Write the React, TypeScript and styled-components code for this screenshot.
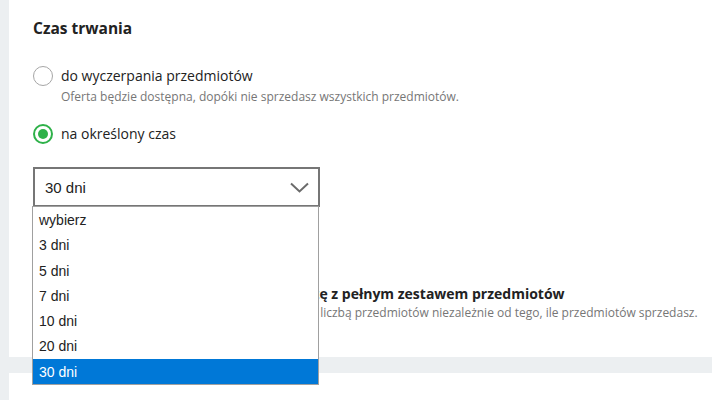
import React from 'react';
import styled, { createGlobalStyle } from 'styled-components';

const GlobalStyle = createGlobalStyle`
  html, body {
    margin: 0;
    padding: 0;
    background: #eceff1;
    font-family: "Open Sans", "Liberation Sans", sans-serif;
    color: #222222;
  }
`;

const Page = styled.div`
  display: flex;
  flex-direction: column;
  gap: 16px;
  padding-left: 9px;
  height: 400px;
  overflow: hidden;
`;

const Card = styled.section<{ $height?: number }>`
  background: #ffffff;
  padding: 16px 24px 0;
  height: ${(p) => (p.$height ? `${p.$height}px` : 'auto')};
  box-sizing: border-box;
  flex-shrink: 0;
`;

const Heading = styled.h2`
  margin: 0;
  font-size: 15.5px;
  font-weight: 700;
  line-height: 24px;
`;

const Options = styled.div`
  display: flex;
  flex-direction: column;
  margin-top: 26px;
`;

const Option = styled.label<{ $gap?: number }>`
  display: flex;
  align-items: flex-start;
  gap: 8px;
  margin-bottom: ${(p) => p.$gap ?? 0}px;
`;

const Radio = styled.span<{ $checked?: boolean }>`
  width: 20px;
  height: 20px;
  box-sizing: border-box;
  border-radius: 50%;
  border: ${(p) => (p.$checked ? '2px solid #2eb149' : '1px solid #a6a6a6')};
  display: flex;
  align-items: center;
  justify-content: center;
  flex-shrink: 0;
  &::after {
    content: '';
    display: ${(p) => (p.$checked ? 'block' : 'none')};
    width: 10px;
    height: 10px;
    border-radius: 50%;
    background: #2eb149;
  }
`;

const Checkbox = styled.span`
  width: 20px;
  height: 20px;
  box-sizing: border-box;
  border: 1px solid #a6a6a6;
  flex-shrink: 0;
`;

const OptionText = styled.div`
  display: flex;
  flex-direction: column;
`;

const Label = styled.span<{ $bold?: boolean }>`
  font-size: 14px;
  line-height: 20px;
  font-weight: ${(p) => (p.$bold ? 700 : 400)};
  white-space: nowrap;
`;

const Hint = styled.span<{ $top?: number }>`
  font-size: 12px;
  line-height: 16px;
  margin-top: ${(p) => p.$top ?? 3}px;
  color: #767676;
  white-space: nowrap;
`;

const SelectWrap = styled.div`
  position: relative;
  width: 287px;
  margin-top: 23px;
`;

const SelectBox = styled.div`
  height: 40px;
  box-sizing: border-box;
  border: 2px solid #767676;
  display: flex;
  align-items: center;
  justify-content: space-between;
  padding: 0 9px 0 10px;
  font-family: "Liberation Sans", Arial, sans-serif;
  font-size: 15px;
  color: #222222;
`;

const Menu = styled.ul`
  position: absolute;
  top: 39px;
  left: -1px;
  width: 287px;
  margin: 0;
  padding: 0;
  list-style: none;
  background: #ffffff;
  border: 1px solid #a0a0a0;
  box-sizing: border-box;
  z-index: 2;
`;

const MenuItem = styled.li<{ $active?: boolean }>`
  height: 25.3px;
  line-height: 26px;
  padding-left: 6px;
  font-family: "Liberation Sans", Arial, sans-serif;
  font-size: 14px;
  background: ${(p) => (p.$active ? '#0078d7' : 'transparent')};
  color: ${(p) => (p.$active ? '#ffffff' : '#222222')};
`;

const Repeat = styled.div`
  margin-top: 77px;
`;

const days = ['wybierz', '3 dni', '5 dni', '7 dni', '10 dni', '20 dni', '30 dni'];

export default function App() {
  return (
    <>
      <GlobalStyle />
      <Page>
        <Card $height={357}>
          <Heading>Czas trwania</Heading>
          <Options>
            <Option $gap={19}>
              <Radio />
              <OptionText>
                <Label>do wyczerpania przedmiotów</Label>
                <Hint>Oferta będzie dostępna, dopóki nie sprzedasz wszystkich przedmiotów.</Hint>
              </OptionText>
            </Option>
            <Option>
              <Radio $checked />
              <OptionText>
                <Label>na określony czas</Label>
              </OptionText>
            </Option>
          </Options>
          <SelectWrap>
            <SelectBox>
              <span>30 dni</span>
              <svg width="19" height="11" viewBox="0 0 19 11" fill="none">
                <path d="M1 1.5 L9.5 9.5 L18 1.5" stroke="#6b6b6b" strokeWidth="2" />
              </svg>
            </SelectBox>
            <Menu>
              {days.map((d) => (
                <MenuItem key={d} $active={d === '30 dni'}>
                  {d}
                </MenuItem>
              ))}
            </Menu>
          </SelectWrap>
          <Repeat>
            <Option>
              <Checkbox />
              <OptionText>
                <Label $bold>Wznawiaj automatycznie każdą ofertę z pełnym zestawem przedmiotów</Label>
                <Hint $top={1}>
                  Oferta zostanie ponownie wystawiona z pełną liczbą przedmiotów niezależnie od tego, ile przedmiotów sprzedasz.
                </Hint>
              </OptionText>
            </Option>
          </Repeat>
        </Card>
        <Card $height={100} />
      </Page>
    </>
  );
}
